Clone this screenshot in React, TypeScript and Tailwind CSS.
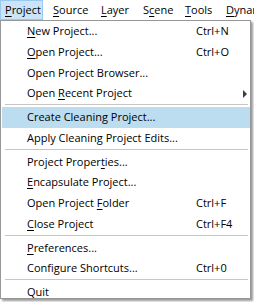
import React from "react";

type Item =
  | { sep: true }
  | {
      sep?: false;
      label: string;
      key?: number; // index of mnemonic letter
      shortcut?: string;
      submenu?: boolean;
      active?: boolean;
    };

const items: Item[] = [
  { label: "New Project...", key: 0, shortcut: "Ctrl+N" },
  { label: "Open Project...", key: 0, shortcut: "Ctrl+O" },
  { label: "Open Project Browser..." },
  { label: "Open Recent Project", key: 5, submenu: true },
  { sep: true },
  { label: "Create Cleaning Project...", active: true },
  { label: "Apply Cleaning Project Edits..." },
  { sep: true },
  { label: "Project Properties...", key: 14 },
  { label: "Encapsulate Project...", key: 0 },
  { label: "Open Project Folder", key: 13, shortcut: "Ctrl+F" },
  { label: "Close Project", key: 0, shortcut: "Ctrl+F4" },
  { sep: true },
  { label: "Preferences...", key: 0 },
  { label: "Configure Shortcuts...", shortcut: "Ctrl+0" },
  { sep: true },
  { label: "Quit", key: 0 },
];

const menus = [
  { label: "Project", key: 0, w: "w-[48px]" },
  { label: "Source", key: 0, w: "w-[48px]" },
  { label: "Layer", key: 0, w: "w-[42px]" },
  { label: "Scene", key: 1, w: "w-[42px]" },
  { label: "Tools", key: 0, w: "w-[41px]" },
  { label: "Dynamics", key: 0, w: "w-[60px]" },
];

function Mnemonic({ text, index }: { text: string; index?: number }) {
  if (index === undefined) return <>{text}</>;
  return (
    <>
      {text.slice(0, index)}
      <span className="underline underline-offset-[2px]">{text[index]}</span>
      {text.slice(index + 1)}
    </>
  );
}

export default function App() {
  return (
    <div
      className="relative w-[254px] h-[302px] overflow-hidden bg-white text-[11px] text-black"
      style={{ fontFamily: '"Open Sans", "Noto Sans", sans-serif' }}
    >
      {/* Menu bar */}
      <div className="flex h-[20px] items-stretch whitespace-nowrap">
        {menus.map((m, i) => (
          <div key={m.label} className={`${m.w} shrink-0 flex`}>
            <div
              className={
                i === 0
                  ? "w-[43px] flex items-center pl-[4px] bg-[#cce4f7] border border-[#99c9ef]"
                  : "flex items-center pl-[5px]"
              }
            >
              <Mnemonic text={m.label} index={m.key} />
            </div>
          </div>
        ))}
      </div>

      {/* Dropdown */}
      <div className="absolute left-0 top-[20px] w-[251px] h-[279px] overflow-hidden bg-white border border-[#979797] shadow-[2px_2px_2px_rgba(0,0,0,0.4)] whitespace-nowrap">
        {items.map((it, i) =>
          it.sep ? (
            <div key={i} className="h-[3px] pl-[4px] pr-[2px]">
              <div className="h-px bg-[#c6c6c6]" />
            </div>
          ) : (
            <div
              key={i}
              className={`h-[20.75px] ml-[1px] mr-0 pl-[25px] flex items-center ${
                it.active ? "bg-[#bcdcf0]" : ""
              }`}
            >
              <span className="w-[169px] shrink-0">
                <Mnemonic text={it.label} index={it.key} />
              </span>
              {it.shortcut && <span>{it.shortcut}</span>}
              {it.submenu && (
                <svg
                  className="ml-auto mr-[3px]"
                  width="4"
                  height="8"
                  viewBox="0 0 4 8"
                >
                  <path d="M0 0 L4 4 L0 8 Z" fill="#3c3c3c" />
                </svg>
              )}
            </div>
          )
        )}
      </div>
    </div>
  );
}
